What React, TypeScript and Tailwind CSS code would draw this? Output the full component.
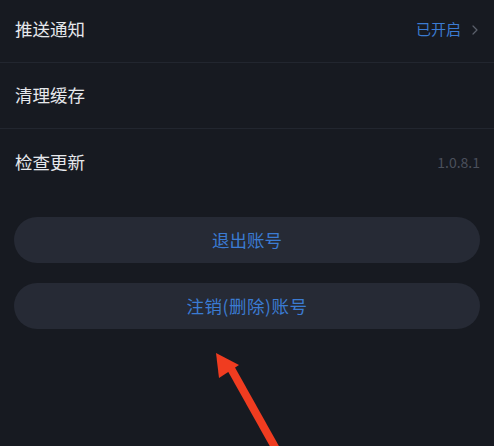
import { ChevronRight } from "lucide-react";

const font = { fontFamily: '"Noto Sans CJK SC", "Noto Sans", sans-serif' };

const Row = ({ label, right, last }: { label: string; right?: React.ReactNode; last?: boolean }) => (
  <div
    className={`flex items-center justify-between h-[66px] px-[14px] ${last ? "" : "border-b border-[#22262f]"}`}
  >
    <span className="text-[17.5px] text-[#e6e8ec] pl-[1px]">{label}</span>
    {right}
  </div>
);

export default function App() {
  return (
    <div className="relative w-[494px] h-[446px] bg-[#171a21] overflow-hidden" style={font}>
      <div className="-mt-[3px]">
        <Row
          label="推送通知"
          right={
            <div className="flex items-center gap-[6px]">
              <span className="text-[15px] text-[#3b7bd2]">已开启</span>
              <ChevronRight className="w-[16px] h-[18px] text-[#5b606b] -mr-[3px]" strokeWidth={1.8} />
            </div>
          }
        />
        <Row label="清理缓存" />
        <Row
          label="检查更新"
          last
          right={<span className="text-[14px] text-[#4a4f5b]">1.0.8.1</span>}
        />
        <div className="flex flex-col gap-[20px] px-[14px] mt-[22px]">
          <button className="h-[46px] rounded-full bg-[#262a35] text-[17.5px] text-[#3b7bd2]">退出账号</button>
          <button className="h-[46px] rounded-full bg-[#262a35] text-[17.5px] text-[#3b7bd2] tracking-[0.5px]">
            注销(删除)账号
          </button>
        </div>
      </div>
      <svg className="absolute left-0 top-0" width="494" height="446" viewBox="0 0 494 446">
        <line x1="276" y1="449" x2="229" y2="365" stroke="#f03c20" strokeWidth="8" />
        <polygon points="216,353 219,378 239,365" fill="#f03c20" />
      </svg>
    </div>
  );
}
